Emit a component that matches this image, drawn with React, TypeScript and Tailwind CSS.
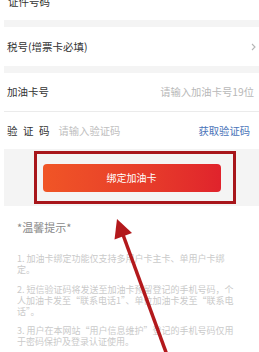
import React from "react";

export default function App() {
  const tips: string[][] = [
    ["1. 加油卡绑定功能仅支持多用户卡主卡、单用户卡绑", "定。"],
    [
      "2. 短信验证码将发送至加油卡预留登记的手机号码，个",
      "人加油卡发至“联系电话1”、单位加油卡发至“联系电",
      "话”。",
    ],
    ["3. 用户在本网站“用户信息维护”登记的手机号码仅用", "于密码保护及登录认证使用。"],
  ];
  return (
    <div className="relative w-[259px] h-[352px] overflow-hidden bg-white font-['Noto_Sans_CJK_SC','Noto_Sans',sans-serif]">
      <div className="ml-[4px]">
        <div className="h-[20px] pl-[4px] overflow-hidden">
          <div className="-mt-[4px] text-[10.5px] leading-[11px] text-[#333]">证件号码</div>
        </div>
        <div className="h-[7px] bg-[#f4f4f4]" />
        <div className="h-[39px] flex items-center justify-between pl-[3px] pr-[3px]">
          <span className="text-[10.5px] leading-[12px] text-[#333]">税号(增票卡必填)</span>
          <svg width="5" height="8" viewBox="0 0 5 8">
            <polyline points="1,1 4,4 1,7" fill="none" stroke="#b5b5b5" strokeWidth="1.1" />
          </svg>
        </div>
        <div className="h-[7px] bg-[#f4f4f4]" />
        <div className="h-[38px] flex items-center justify-between pl-[3px] pr-[5px]">
          <span className="text-[10.5px] leading-[12px] text-[#333]">加油卡号</span>
          <span className="text-[10.3px] leading-[12px] text-[#b8b8b8]">请输入加油卡号19位</span>
        </div>
        <div className="h-px bg-[#ebebeb]" />
        <div className="h-[37px] flex items-center pl-[3px] pr-[9px]">
          <span className="flex gap-[5.5px] text-[10.5px] leading-[12px] text-[#333]">
            <span>验</span>
            <span>证</span>
            <span>码</span>
          </span>
          <span className="ml-[9px] text-[10.3px] leading-[12px] text-[#c0c0c0]">请输入验证码</span>
          <span className="ml-auto text-[10.3px] leading-[12px] text-[#4a74b9]">获取验证码</span>
        </div>
        <div className="relative h-[57px] bg-[#f4f4f4] flex items-center justify-center">
          <div className="w-[178px] h-[28px] rounded-[4px] bg-gradient-to-r from-[#f05526] to-[#e0232c] flex items-center justify-center">
            <span className="text-[10px] leading-[12px] text-white">绑定加油卡</span>
          </div>
          <div className="absolute left-[30px] top-[2px] w-[202px] h-[53px] border-[3px] border-[#a8161b]" />
        </div>
        <div className="pl-[13px] pr-[10px]">
          <div className="mt-[14px] text-[11px] leading-[14px] text-[#888]">*温馨提示*</div>
          <div className="mt-[19px] flex flex-col gap-[8.5px]">
            {tips.map((p, i) => (
              <div key={i} className="text-[9px] leading-[11px] text-[#cacaca]">
                {p.map((l, j) => (
                  <div key={j} className="whitespace-nowrap">
                    {l}
                  </div>
                ))}
              </div>
            ))}
          </div>
        </div>
      </div>
      <svg className="absolute inset-0 pointer-events-none" width="259" height="352" viewBox="0 0 259 352">
        <line x1="167" y1="355" x2="122" y2="232" stroke="#b3191c" strokeWidth="3.5" />
        <polygon points="117,219 132,233 114.5,239.5" fill="#b3191c" />
      </svg>
    </div>
  );
}
